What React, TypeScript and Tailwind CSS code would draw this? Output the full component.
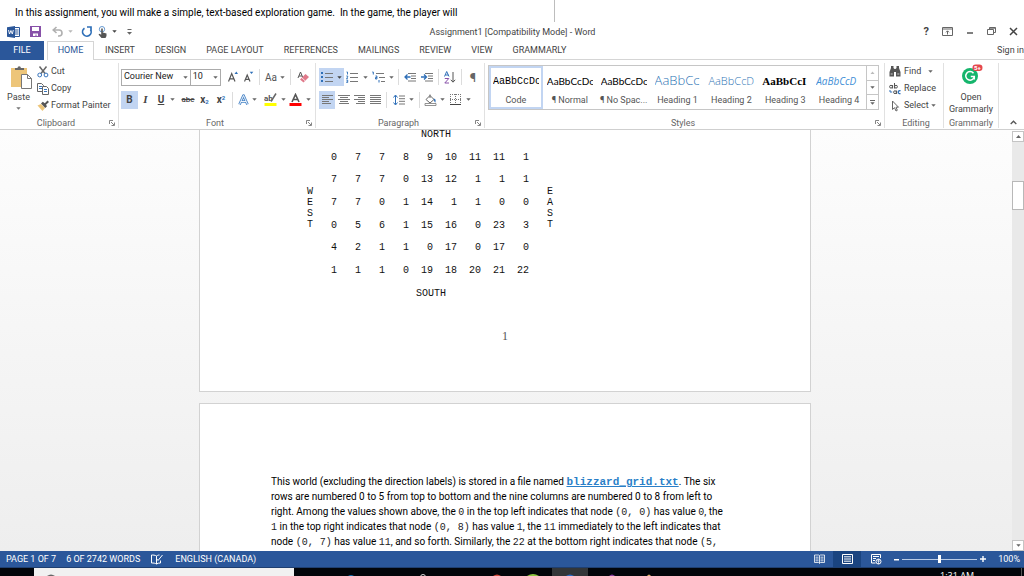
import React, { useState } from 'react';

const ROWS = [
  [0, 7, 7, 8, 9, 10, 11, 11, 1],
  [7, 7, 7, 0, 13, 12, 1, 1, 1],
  [7, 7, 0, 1, 14, 1, 1, 0, 0],
  [0, 5, 6, 1, 15, 16, 0, 23, 3],
  [4, 2, 1, 1, 0, 17, 0, 17, 0],
  [1, 1, 1, 0, 19, 18, 20, 21, 22],
];

const TABS = ['INSERT', 'DESIGN', 'PAGE LAYOUT', 'REFERENCES', 'MAILINGS', 'REVIEW', 'VIEW', 'GRAMMARLY'];

const STYLES = [
  { name: 'Code', sample: 'AaBbCcDc', cls: "font-['Liberation_Mono',monospace] text-[10px] text-black" },
  { name: '¶ Normal', sample: 'AaBbCcDc', cls: "font-['Lato',sans-serif] text-[10px] text-black" },
  { name: '¶ No Spac...', sample: 'AaBbCcDc', cls: "font-['Lato',sans-serif] text-[10px] text-black" },
  { name: 'Heading 1', sample: 'AaBbCc', cls: "font-['Open_Sans',sans-serif] font-light text-[13px] text-[#2e74b5]" },
  { name: 'Heading 2', sample: 'AaBbCcD', cls: "font-['Open_Sans',sans-serif] font-light text-[11px] text-[#2e74b5]" },
  { name: 'Heading 3', sample: 'AaBbCcI', cls: "font-['Liberation_Serif',serif] font-bold text-[11px] text-black" },
  { name: 'Heading 4', sample: 'AaBbCcD', cls: "font-['Open_Sans',sans-serif] italic text-[10px] text-[#3f8fd6]" },
];

function Caret({ className = 'text-[#666]' }: { className?: string }) {
  return (
    <svg width="5" height="3" viewBox="0 0 5 3" className={`shrink-0 ${className}`}>
      <path d="M0.3 0.2h4.4L2.5 2.8z" fill="currentColor" />
    </svg>
  );
}

function Sep() {
  return <span className="w-px h-4 bg-[#dcdcdc] shrink-0" />;
}

function Tool({ label, className = '', children }: { label: string; className?: string; children: React.ReactNode }) {
  return (
    <button aria-label={label} className={`h-[18px] shrink-0 flex items-center justify-center ${className}`}>
      {children}
    </button>
  );
}

// Horizontal rules used by the alignment buttons
function Lines({ rows }: { rows: [number, number][] }) {
  return (
    <svg width="12" height="11" viewBox="0 0 12 11" stroke="#777" shapeRendering="crispEdges">
      {rows.map(([a, b], i) => (
        <path key={i} d={`M${a} ${i * 2 + 1.5}H${b}`} />
      ))}
    </svg>
  );
}

function Launcher() {
  return (
    <svg width="6" height="6" viewBox="0 0 6 6" fill="none" stroke="#777" strokeWidth="0.9">
      <path d="M0.5 4V0.5H4M2 2l3 3M5.5 2.5v3h-3" />
    </svg>
  );
}

function Group({ label, className = '', launcher, children }: { label: string; className?: string; launcher?: boolean; children: React.ReactNode }) {
  return (
    <section className={`flex flex-col border-r border-[#e1e1e1] h-[65px] shrink-0 ${className}`}>
      <div className="flex-1">{children}</div>
      <div className="h-[10px] flex items-center px-[3px] text-[#666]">
        <span className="flex-1 text-center leading-[10px] whitespace-nowrap">{label}</span>
        {launcher && <button aria-label={`${label} settings`}><Launcher /></button>}
      </div>
    </section>
  );
}

function TitleBar() {
  return (
    <header className="h-[19px] flex items-center justify-between text-[#444]">
      <div className="flex-1 flex items-center pl-[7px]">
        <svg width="13" height="12" viewBox="0 0 13 12">
          <path d="M7 1.5h5.5v9H7z" fill="#fff" stroke="#2b579a" />
          <path d="M8 4h3.5M8 6h3.5M8 8h3.5" stroke="#2b579a" />
          <path d="M0 1.2L8 0v12L0 10.800z" fill="#2b579a" />
          <path d="M1.5 4l1 4 1.400-3.500L5.300 8l1-4" stroke="#fff" fill="none" strokeWidth="0.9" />
        </svg>
        <button aria-label="Save" className="ml-[10px]">
          <svg width="11" height="11" viewBox="0 0 11 11">
            <path d="M0 0h11v11H0z" fill="#8750a8" />
            <path d="M2 1h7v4H2zM3 7.500h5V10H6.500V8.500h-1V10H3z" fill="#fff" />
          </svg>
        </button>
        <button aria-label="Undo" className="ml-[11px] flex items-center gap-1">
          <svg width="12" height="11" viewBox="0 0 12 11" fill="none" stroke="#b0b0b0" strokeWidth="1.600">
            <path d="M4.500 1L1.200 4 4.500 7M1.500 4H7a3 3 0 0 1 0 6H6" />
          </svg>
          <Caret className="text-[#b8b8b8]" />
        </button>
        <button aria-label="Redo" className="ml-[8px]">
          <svg width="12" height="12" viewBox="0 0 12 12" fill="none" stroke="#2e6fb8" strokeWidth="1.700">
            <path d="M3.500 2.200A4.300 4.300 0 1 0 9.500 3.500M6 1h4v4" />
          </svg>
        </button>
        <button aria-label="Touch mode" className="ml-[5px] flex items-center gap-1">
          <svg width="10" height="12" viewBox="0 0 10 12">
            <circle cx="4" cy="3.200" r="2.700" fill="none" stroke="#6a9bd1" />
            <path d="M3.200 2.500h1.600v4l3.700 1V10L7.500 12h-4L0.500 8.500l1-0.700 1.700 1z" fill="#555" />
          </svg>
          <Caret className="text-[#444]" />
        </button>
        <button aria-label="Customize toolbar" className="ml-[10px]">
          <svg width="5" height="6" viewBox="0 0 5 6" fill="#666">
            <path d="M0.500 0h4v1h-4zM0 3h5L2.500 5.800z" />
          </svg>
        </button>
      </div>
      <h1 className="text-[9px] pt-[2px] whitespace-nowrap">Assignment1 [Compatibility Mode] - Word</h1>
      <div className="flex-1 flex items-center justify-end gap-[13px] pr-[6px]">
        <button aria-label="Help" className="text-[11px] leading-none font-bold">?</button>
        <button aria-label="Ribbon display options">
          <svg width="11" height="9" viewBox="0 0 11 9" fill="none" stroke="#666">
            <path d="M0.500 0.500h10v8H0.500zM0.500 2h10M5.500 7.500V4M4 5.300L5.500 3.800 7 5.300" />
          </svg>
        </button>
        <button aria-label="Minimize">
          <svg width="8" height="9" viewBox="0 0 8 9" stroke="#555" strokeWidth="1.500"><path d="M1 6h6" /></svg>
        </button>
        <button aria-label="Restore">
          <svg width="9" height="9" viewBox="0 0 9 9" fill="none" stroke="#666">
            <path d="M2.500 2.500v-2h6v5h-2M0.500 2.500h6v5h-6zM2.500 1.200h6" />
          </svg>
        </button>
        <button aria-label="Close">
          <svg width="9" height="9" viewBox="0 0 9 9" stroke="#444" strokeWidth="1.500"><path d="M1 1l7 7M8 1L1 8" /></svg>
        </button>
      </div>
    </header>
  );
}

function TabBar() {
  return (
    <nav className="h-[19px] flex items-stretch text-[#444] whitespace-nowrap">
      <button className="w-11 mr-[3px] bg-[#2b579a] text-white">FILE</button>
      <button className="w-[47px] border border-b-0 border-[#d5d5d5] text-[#2b579a]">HOME</button>
      <div className="flex-1 flex items-center justify-between border-b border-[#d5d5d5] pl-[11px]">
        <div className="flex gap-5 pt-[2px]">
          {TABS.map(t => <button key={t}>{t}</button>)}
        </div>
        <a href="#signin" className="leading-none">Sign in</a>
      </div>
    </nav>
  );
}

function Clipboard() {
  return (
    <Group label="Clipboard" launcher className="w-[119px]">
      <div className="flex">
        <button className="w-[37px] flex flex-col items-center pt-[2px]">
          <svg width="22" height="24" viewBox="0 0 22 24" className="ml-1">
            <path d="M1 3h16v19H1z" fill="#edc579" />
            <path d="M5 5V3h2.500a1.700 1.700 0 0 1 3.400 0H14v2z" fill="#666" />
            <path d="M11.500 9.500h6l4 4v10h-10z" fill="#fff" stroke="#777" />
            <path d="M17.500 9.500v4h4" fill="none" stroke="#777" />
          </svg>
          <span className="leading-3 mt-[2px]">Paste</span>
          <Caret className="text-[#777] mt-1" />
        </button>
        <div className="flex flex-col items-start text-[#444]">
          <button className="h-[17px] flex items-center gap-[2px]">
            <svg width="12" height="12" viewBox="0 0 12 12" fill="none">
              <path d="M2.500 0.500l5.500 7M9.500 0.500L4 7.500" stroke="#666" strokeWidth="1.500" />
              <circle cx="2.700" cy="9" r="1.900" stroke="#3a76bd" />
              <circle cx="9" cy="9" r="1.900" stroke="#3a76bd" />
            </svg>
            Cut
          </button>
          <button className="h-[17px] flex items-center gap-[2px]">
            <svg width="12" height="12" viewBox="0 0 12 12" fill="#fff" stroke="#666">
              <path d="M0.500 0.500h4l2 2v6h-6z" />
              <path d="M2 3.500h3M2 5.500h3" stroke="#3a76bd" />
              <path d="M5.500 3.500h4l2 2v6h-6z" />
              <path d="M7 6.500h3M7 8.500h3" stroke="#3a76bd" />
            </svg>
            Copy
          </button>
          <button className="h-[17px] flex items-center gap-[2px] whitespace-nowrap">
            <svg width="12" height="12" viewBox="0 0 12 12">
              <path d="M0.500 5.500l3.500-1.500 4 4L5.500 11z" fill="#edc579" />
              <path d="M4 3.500l1.800-1.700 2 1.500L10.500 0.500 12 2 9 4.700l1 1.600L8.300 8z" fill="#555" />
            </svg>
            Format Painter
          </button>
        </div>
      </div>
    </Group>
  );
}

function FontGroup() {
  return (
    <Group label="Font" launcher className="w-[197px] pl-[2px]">
      <div className="h-[23px] pt-[5px] flex items-center">
        <div className="relative w-[71px]">
          <select aria-label="Font" className="appearance-none w-full h-[17px] border border-[#ababab] bg-white text-[#222] pl-[2px] block">
            <option>Courier New</option>
            <option>Calibri</option>
          </select>
          <Caret className="absolute right-[3px] top-[7px] text-[#666] pointer-events-none" />
        </div>
        <div className="relative w-8 -ml-px">
          <select aria-label="Font size" className="appearance-none w-full h-[17px] border border-[#ababab] bg-white text-[#222] pl-[2px] block">
            <option>10</option>
            <option>12</option>
          </select>
          <Caret className="absolute right-[3px] top-[7px] text-[#666] pointer-events-none" />
        </div>
        <Tool label="Grow font" className="w-[21px] pl-1">
          <svg width="11" height="12" viewBox="0 0 11 12" fill="none">
            <path d="M0.500 10.500L3.700 2.500 7 10.500M1.700 7.800h4" stroke="#555" strokeWidth="1.200" />
            <path d="M6.500 3L8.300 0.500 10 3z" fill="#2e6fb8" />
          </svg>
        </Tool>
        <Tool label="Shrink font" className="w-[14px]">
          <svg width="10" height="12" viewBox="0 0 10 12" fill="none">
            <path d="M0.500 10.500L3.200 4 6 10.500M1.500 8.300h3.400" stroke="#555" strokeWidth="1.200" />
            <path d="M5.700 0.700L7.500 3 9.300 0.700z" fill="#2e6fb8" />
          </svg>
        </Tool>
        <span className="w-[3px]" />
        <Sep />
        <Tool label="Change case" className="w-[30px] gap-[3px] text-[10px] text-[#555]">Aa<Caret /></Tool>
        <Sep />
        <Tool label="Clear formatting" className="w-6">
          <svg width="12" height="12" viewBox="0 0 12 12">
            <path d="M1 7L3.500 1 6 7M2 5h3" fill="none" stroke="#555" />
            <path d="M3 8.500L8.500 3 12 6 6.500 11.500z" fill="#e0798a" />
            <path d="M4.800 6.700l3.400 3.200" stroke="#fff" strokeWidth="0.800" />
          </svg>
        </Tool>
      </div>
      <div className="h-[27px] flex items-center text-[#444] text-[10px]">
        <Tool label="Bold" className="w-[17px] bg-[#c2d5f2] font-bold">B</Tool>
        <Tool label="Italic" className="w-[15px] italic font-['Liberation_Serif',serif] text-[11px] font-bold">I</Tool>
        <Tool label="Underline" className="w-[27px] gap-[6px] font-bold"><span className="underline">U</span><Caret /></Tool>
        <Tool label="Strikethrough" className="w-4 text-[8px] font-medium"><s>abc</s></Tool>
        <Tool label="Subscript" className="w-[17px] font-bold">
          x<span className="text-[6px] text-[#2e6fb8] mt-1">2</span>
        </Tool>
        <Tool label="Superscript" className="w-4 font-bold">
          x<span className="text-[6px] text-[#2e6fb8] mb-1">2</span>
        </Tool>
        <span className="w-[3px]" />
        <Sep />
        <Tool label="Text effects" className="w-[29px] gap-[3px]">
          <svg width="11" height="12" viewBox="0 0 11 12" fill="none">
            <path d="M1.500 10.500L5.500 1.500 9.500 10.500M3 7.500h5" stroke="#4a86c8" strokeWidth="2.600" strokeLinejoin="round" />
            <path d="M1.500 10.500L5.500 1.500 9.500 10.500M3 7.500h5" stroke="#fff" strokeWidth="0.900" />
          </svg>
          <Caret />
        </Tool>
        <Tool label="Highlight color" className="w-[25px] gap-1">
          <svg width="13" height="13" viewBox="0 0 13 13">
            <text x="0" y="8" fontSize="8" fontWeight="bold" fill="#555">ab</text>
            <path d="M12 0.500L7 8.500" stroke="#666" strokeWidth="1.500" />
            <path d="M0.500 10h12v3h-12z" fill="#ff0" />
          </svg>
          <Caret />
        </Tool>
        <Tool label="Font color" className="w-[26px] gap-1">
          <svg width="13" height="13" viewBox="0 0 13 13">
            <path d="M3 9L6.500 1.500 10 9M4.500 6.500h4" fill="none" stroke="#555" strokeWidth="1.600" />
            <path d="M0.500 10h12v3h-12z" fill="#f00" />
          </svg>
          <Caret />
        </Tool>
      </div>
    </Group>
  );
}

function ParagraphGroup() {
  return (
    <Group label="Paragraph" launcher className="w-[169px] pl-[3px]">
      <div className="h-[23px] pt-[5px] flex items-center">
        <Tool label="Bullets" className="w-[25px] gap-1 bg-[#c2d5f2]">
          <svg width="12" height="12" viewBox="0 0 12 12" shapeRendering="crispEdges">
            <path d="M0 1h2v2H0zM0 5h2v2H0zM0 9h2v2H0z" fill="#2e6fb8" />
            <path d="M4 2.500h8M4 6.500h8M4 10.500h8" stroke="#777" />
          </svg>
          <Caret className="text-[#444]" />
        </Tool>
        <Tool label="Numbering" className="w-[26px] gap-[5px]">
          <svg width="12" height="12" viewBox="0 0 12 12" fill="none">
            <path d="M0.500 1h1v2.500M0.300 5h1.400v1L0.500 7.500h1.300M0.300 9h1.400v2.500H0.300M0.500 10.200h1" stroke="#2e6fb8" strokeWidth="0.900" />
            <path d="M4 2.500h8M4 6.500h8M4 10.500h8" stroke="#777" />
          </svg>
          <Caret />
        </Tool>
        <Tool label="Multilevel list" className="w-[25px] gap-[3px]">
          <svg width="14" height="12" viewBox="0 0 14 12" fill="none">
            <path d="M0.300 1h1v2.500M3.500 5h1.400v3H3.500V6.500h1.400M7 9v2.500" stroke="#2e6fb8" />
            <path d="M4 2.500h8M7 6.500h6M9 10.500h4" stroke="#777" />
          </svg>
          <Caret />
        </Tool>
        <span className="w-[3px]" />
        <Sep />
        <Tool label="Decrease indent" className="w-[22px]">
          <svg width="12" height="10" viewBox="0 0 12 10" fill="none">
            <path d="M4 1.500h8M7 4h5M7 6.500h5M4 9h8" stroke="#777" />
            <path d="M6.500 5H1M3.500 2.500L1 5l2.500 2.500" stroke="#2e6fb8" strokeWidth="1.300" />
          </svg>
        </Tool>
        <Tool label="Increase indent" className="w-3">
          <svg width="12" height="10" viewBox="0 0 12 10" fill="none">
            <path d="M4 1.500h8M7 4h5M7 6.500h5M4 9h8" stroke="#777" />
            <path d="M0 5h5.500M3 2.500L5.500 5 3 7.500" stroke="#2e6fb8" strokeWidth="1.300" />
          </svg>
        </Tool>
        <span className="w-[5px]" />
        <Sep />
        <Tool label="Sort" className="w-[22px]">
          <svg width="12" height="13" viewBox="0 0 12 13" fill="none">
            <path d="M0.500 5.500L2.700 0.500 5 5.500M1.300 4h3" stroke="#2e6fb8" />
            <path d="M0.800 7.500h4l-4 4.500h4.200" stroke="#8750a8" />
            <path d="M9 1v10M6.800 8.800L9 11.200l2.200-2.400" stroke="#555" />
          </svg>
        </Tool>
        <Sep />
        <Tool label="Show marks" className="w-[22px] text-[13px] leading-none text-[#666]">¶</Tool>
      </div>
      <div className="h-[27px] flex items-center">
        <Tool label="Align left" className="w-4 bg-[#c2d5f2]"><Lines rows={[[1, 12], [1, 8], [1, 12], [1, 8], [1, 10]]} /></Tool>
        <Tool label="Center" className="w-[17px]"><Lines rows={[[0, 12], [2, 10], [0, 12], [2, 10], [1, 11]]} /></Tool>
        <Tool label="Align right" className="w-4"><Lines rows={[[0, 11], [4, 11], [0, 11], [4, 11], [2, 11]]} /></Tool>
        <Tool label="Justify" className="w-4"><Lines rows={[[0, 11], [0, 11], [0, 11], [0, 11], [0, 11]]} /></Tool>
        <span className="w-[2px]" />
        <Sep />
        <Tool label="Line spacing" className="w-8 gap-1">
          <svg width="12" height="12" viewBox="0 0 12 12" fill="none">
            <path d="M2.500 1.500v9M0.500 3.500l2-2.500 2 2.500M0.500 8.500l2 2.500 2-2.500" stroke="#2e6fb8" />
            <path d="M6 2h6M6 4.700h6M6 7.300h6M6 10h6" stroke="#777" />
          </svg>
          <Caret />
        </Tool>
        <Sep />
        <Tool label="Shading" className="w-[29px] gap-[3px]">
          <svg width="13" height="12" viewBox="0 0 13 12">
            <path d="M2 5.500L6 1.500l4 4-4 3.500z" fill="#fff" stroke="#666" />
            <path d="M6 4V0.500" stroke="#666" />
            <path d="M9.500 4.500c3 0.500 2 2.500 2 4-1 0-1.500-2-2-4z" fill="#2e6fb8" />
            <path d="M1 9.500h11v2H1z" fill="#fff" stroke="#777" strokeWidth="0.800" />
          </svg>
          <Caret />
        </Tool>
        <Tool label="Borders" className="w-[22px] gap-[5px]">
          <svg width="11" height="11" viewBox="0 0 11 11" stroke="#777" fill="none">
            <path d="M0 0.500h11M0 5.500h11M0.500 0v10M5.500 0v10M10.500 0v10" strokeDasharray="1 1" />
            <path d="M0 10.500h11" stroke="#444" />
          </svg>
          <Caret />
        </Tool>
      </div>
    </Group>
  );
}

function StylesGroup() {
  const [active, setActive] = useState('Code');
  return (
    <Group label="Styles" launcher className="flex-1 min-w-0 pl-[3px]">
      <div className="mt-[2px] mr-[5px] h-[45px] flex border border-[#c6c6c6]">
        <div className="flex-1 flex min-w-0 overflow-hidden">
          {STYLES.map(s => (
            <button
              key={s.name}
              onClick={() => setActive(s.name)}
              className={`flex-1 min-w-0 border-2 px-[2px] flex flex-col items-center ${active === s.name ? 'border-[#c2d5f2]' : 'border-transparent'}`}
            >
              <span className={`h-[26px] w-full flex items-center justify-start overflow-hidden whitespace-nowrap ${s.cls}`}>{s.sample}</span>
              <span className="leading-3 text-[#555] whitespace-nowrap">{s.name}</span>
            </button>
          ))}
        </div>
        <div className="w-3 flex flex-col border-l border-[#c6c6c6] divide-y divide-[#c6c6c6]">
          <button aria-label="Previous styles" className="flex-1 flex items-center justify-center">
            <svg width="5" height="3" viewBox="0 0 5 3"><path d="M0.500 3h4L2.500 0.500z" fill="#bbb" /></svg>
          </button>
          <button aria-label="Next styles" className="flex-1 flex items-center justify-center"><Caret /></button>
          <button aria-label="More styles" className="flex-1 flex flex-col gap-px items-center justify-center">
            <span className="w-[5px] h-px bg-[#666]" />
            <Caret />
          </button>
        </div>
      </div>
    </Group>
  );
}

function EditingGroup() {
  return (
    <Group label="Editing" className="w-[59px] pl-1">
      <div className="flex flex-col items-start text-[#444]">
        <button className="h-[17px] flex items-center gap-[3px]">
          <svg width="12" height="11" viewBox="0 0 12 11" fill="#555">
            <path d="M2 0h2.500v2L5.500 3h1l1-1V0H10v2l1.500 4v4.500H7V6H5v4.500H0.500V6L2 2z" />
            <path d="M1.700 8h2M8.300 8h2" stroke="#fff" strokeWidth="0.700" />
          </svg>
          Find
          <Caret className="ml-1 text-[#666]" />
        </button>
        <button className="h-[17px] flex items-center gap-[3px]">
          {/* two small letter pairs joined by an arrow */}
          <svg width="12" height="12" viewBox="0 0 12 12" fill="none">
            <circle cx="2" cy="3.700" r="1.400" stroke="#555" />
            <path d="M3.600 2v3.500M5.500 0v5.500" stroke="#555" />
            <circle cx="7" cy="3.700" r="1.400" stroke="#555" />
            <circle cx="6" cy="9.200" r="1.400" stroke="#555" />
            <path d="M7.600 7.500V11" stroke="#555" />
            <path d="M11.500 7.900a1.500 1.500 0 1 0 0 2.600" stroke="#2e6fb8" strokeWidth="1.300" />
            <path d="M1 7v2h2.200" stroke="#2e6fb8" />
          </svg>
          Replace
        </button>
        <button className="h-[17px] flex items-center gap-[3px]">
          <svg width="12" height="12" viewBox="0 0 12 12" fill="#fff" stroke="#666">
            <path d="M3.500 1v8.500l2-1.800L7 11l1.300-0.700L7 7.200h2.500z" />
          </svg>
          <span className="flex items-center gap-[2px]">Select<Caret /></span>
        </button>
      </div>
    </Group>
  );
}

function Ribbon() {
  return (
    <div className="h-[70px] pt-[3px] flex border-b border-[#cfcfcf] text-[#444]">
      <Clipboard />
      <FontGroup />
      <ParagraphGroup />
      <StylesGroup />
      <EditingGroup />
      <Group label="Grammarly" className="w-[55px]">
        <button className="w-full flex flex-col items-center">
          <svg width="24" height="22" viewBox="0 0 24 22">
            <circle cx="11" cy="13" r="8" fill="#15b56c" />
            <path d="M14.500 10.300A4.300 4.300 0 1 0 15.300 13.500H11.800M15.300 13.500v3" fill="none" stroke="#fff" strokeWidth="1.500" />
            <rect x="13.500" y="1.500" width="10" height="6.500" rx="3.200" fill="#e5484d" />
            <text x="15" y="7" fontSize="6" fontWeight="bold" fill="#fff">5+</text>
          </svg>
          <span className="leading-3 mt-[6px]">Open<br />Grammarly</span>
        </button>
      </Group>
      <button aria-label="Collapse ribbon" className="flex-none w-[25px] flex items-end justify-center pb-1 pl-1">
        <svg width="7" height="5" viewBox="0 0 7 5" fill="none" stroke="#555" strokeWidth="1.300"><path d="M0.700 4L3.500 1.200 6.300 4" /></svg>
      </button>
    </div>
  );
}

function Side({ word }: { word: string }) {
  return (
    <div className="w-[6px] pt-10 flex flex-col leading-[11px]">
      {word.split('').map((c, i) => <span key={i}>{c}</span>)}
    </div>
  );
}

function Code({ children }: { children: React.ReactNode }) {
  return <code className="font-['Liberation_Mono',monospace] text-[10px] leading-none text-[#222]">{children}</code>;
}

function Document() {
  return (
    <main className="flex-1 min-w-0 overflow-hidden flex flex-col items-center gap-[11px]">
      <article className="w-[612px] h-[262px] shrink-0 bg-white border border-t-0 border-[#d2d2d2] text-[#111] font-['Liberation_Mono',monospace] text-[10px]">
        <p className="leading-[11px] -mt-px pl-[221px]">NORTH</p>
        <div className="flex pl-[107px] pt-[6px]">
          <Side word="WEST" />
          <table className="h-[136px]">
            <tbody>
              {ROWS.map((row, i) => (
                <tr key={i}>
                  {row.map((n, j) => <td key={j} className="w-6 p-0 text-right leading-[11px] align-middle">{n}</td>)}
                </tr>
              ))}
            </tbody>
          </table>
          <span className="w-[18px]" />
          <Side word="EAST" />
        </div>
        <p className="pt-[6px] leading-[11px] pl-[216px]">SOUTH</p>
        <p className="pt-[30px] leading-[14px] text-center font-['Liberation_Serif',serif] text-[12px] text-[#555]">1</p>
      </article>
      <article className="w-[612px] h-[792px] shrink-0 bg-white border border-[#d2d2d2] px-[71px] pt-[70px] text-black font-['Roboto',sans-serif] text-[10px] leading-[15px] whitespace-nowrap">
        <p>
          This world (excluding the direction labels) is stored in a file named{' '}
          <a href="#grid" className="font-['Liberation_Mono',monospace] text-[11px] leading-none font-bold text-[#2a7fc8] underline">blizzard_grid.txt</a>. The six<br />
          rows are numbered 0 to 5 from top to bottom and the nine columns are numbered 0 to 8 from left to<br />
          right. Among the values shown above, the <Code>0</Code> in the top left indicates that node <Code>(0, 0)</Code> has value <Code>0</Code>, the<br />
          <Code>1</Code> in the top right indicates that node <Code>(0, 8)</Code> has value <Code>1</Code>, the <Code>11</Code> immediately to the left indicates that<br />
          node <Code>(0, 7)</Code> has value <Code>11</Code>, and so forth. Similarly, the <Code>22</Code> at the bottom right indicates that node <Code>(5,</Code><br />
          <Code>8)</Code> has value <Code>22</Code>.
        </p>
      </article>
    </main>
  );
}

function ScrollBar() {
  return (
    <div className="w-[14px] pl-[2px] shrink-0 flex flex-col">
      <button aria-label="Scroll up" className="h-[11px] mt-px border border-[#c4c4c4] bg-white flex items-center justify-center">
        <svg width="5" height="3" viewBox="0 0 5 3"><path d="M0 3h5L2.500 0z" fill="#666" /></svg>
      </button>
      <div className="flex-1 bg-[#e9e9e9] pt-[39px]">
        <div className="h-[29px] bg-white border border-[#b8b8b8]" />
      </div>
      <button aria-label="Scroll down" className="h-[11px] border border-[#c4c4c4] bg-white flex items-center justify-center">
        <Caret />
      </button>
    </div>
  );
}

function StatusBar() {
  const [zoom, setZoom] = useState(50);
  return (
    <footer className="h-[17px] shrink-0 bg-[#2b579a] border-b border-[#1f3f70] text-white flex items-center whitespace-nowrap">
      <span className="pl-[6px] pt-px">PAGE 1 OF 7</span>
      <span className="pl-[10px] pt-px">6 OF 2742 WORDS</span>
      <button aria-label="Proofing" className="ml-[11px]">
        <svg width="12" height="11" viewBox="0 0 12 11" fill="none" stroke="#fff">
          <path d="M5.500 2v8M5.500 2C4 1 2 1 0.500 1v8c2 0 3.500 0 5 1 1-0.800 2.500-1 4-1V6.500M5.500 2C7 1 8 1 8.500 1M11.500 1L7 6.500 5.800 5" />
        </svg>
      </button>
      <span className="pl-3 pt-px flex-1">ENGLISH (CANADA)</span>
      <button aria-label="Read mode" className="mr-2">
        <svg width="11" height="10" viewBox="0 0 11 10" fill="none" stroke="#fff">
          <path d="M0.500 1h4l1 0.700 1-0.700h4v7.500h-4l-1 0.700-1-0.700h-4zM5.500 1.500v8M1.500 3.200h3M1.500 5h3M1.500 6.800h3M6.500 3.200h3M6.500 5h3M6.500 6.800h3" strokeWidth="0.800" />
        </svg>
      </button>
      <button aria-label="Print layout" className="w-7 h-4 bg-[#1a4480] flex items-center justify-center">
        <svg width="11" height="10" viewBox="0 0 11 10" fill="none" stroke="#fff">
          <path d="M0.500 0.500h10v9H0.500zM2 2.800h7M2 5h7M2 7.200h7" />
        </svg>
      </button>
      <button aria-label="Web layout" className="ml-[10px]">
        <svg width="11" height="11" viewBox="0 0 11 11" fill="none" stroke="#fff">
          <path d="M4.500 9H0.500V0.500h9V4M2 2.500h6M2 4.500h3M2 6.500h2" />
          <circle cx="7.500" cy="7.500" r="2.500" />
          <path d="M6 7h3M7.500 5v5" strokeWidth="0.700" />
        </svg>
      </button>
      <button aria-label="Zoom out" className="ml-3">
        <svg width="5" height="5" viewBox="0 0 5 5"><path d="M0 2h5v1.500H0z" fill="#fff" /></svg>
      </button>
      <input
        type="range"
        aria-label="Zoom"
        value={zoom}
        onChange={e => setZoom(Number(e.target.value))}
        className="mx-[3px] w-[75px] h-3 appearance-none bg-transparent [&::-webkit-slider-runnable-track]:h-px [&::-webkit-slider-runnable-track]:bg-[#b9cbe6] [&::-webkit-slider-thumb]:appearance-none [&::-webkit-slider-thumb]:w-[3px] [&::-webkit-slider-thumb]:h-2 [&::-webkit-slider-thumb]:-mt-1 [&::-webkit-slider-thumb]:bg-white"
      />
      <button aria-label="Zoom in">
        <svg width="6" height="6" viewBox="0 0 6 6"><path d="M0 2.300h6v1.400H0zM2.300 0h1.400v6H2.300z" fill="#fff" /></svg>
      </button>
      <span className="ml-3 mr-1 pt-px">100%</span>
    </footer>
  );
}

function TaskBar() {
  return (
    <div className="h-2 shrink-0 bg-[#02050a] flex overflow-hidden text-white">
      <div className="ml-[34px] w-[260px] flex justify-start bg-[#f1f1f1]">
        <svg width="40" height="8" viewBox="0 0 40 8">
          <path d="M13 8q4-3 8 0z" fill="#666" />
        </svg>
      </div>
      <svg width="360" height="8" viewBox="0 0 360 8">
        <path d="M258 0h36v8h-36z" fill="#333638" />
        <path d="M54 8q3-2 6 0z" fill="#1273b5" />
        <circle cx="129" cy="9" r="2.500" fill="none" stroke="#ddd" />
        <path d="M199 8q4-3 8 0z" fill="#d04a3c" />
        <path d="M233 8q6-4 12 0z" fill="#8bc540" />
        <path d="M272 8q4-3 8 0z" fill="#2b6cc4" />
        <path d="M315 8q3-3 6 0z" fill="#8a3fa0" />
        <path d="M353 8q2-3 4 0z" fill="#e0b070" />
      </svg>
      <span className="ml-auto mr-[47px] pt-[3px] leading-[10px] font-['Open_Sans',sans-serif]">1:31 AM</span>
      <span className="w-px bg-[#555] mr-[2px]" />
    </div>
  );
}

export default function App() {
  return (
    <div className="h-screen flex flex-col overflow-hidden bg-white font-['Roboto',sans-serif] text-[9px]">
      <div className="h-[22px] shrink-0 flex text-black">
        <p className="w-[555px] border-r border-[#bdbdbd] pl-[15px] pt-[5px] leading-4 text-[10px] whitespace-pre">
          In this assignment, you will make a simple, text-based exploration game.  In the game, the player will
        </p>
      </div>
      <TitleBar />
      <TabBar />
      <Ribbon />
      <div className="flex-1 min-h-0 flex bg-linear-to-b from-[#fdfdfd] to-[#eeeeee]">
        <Document />
        <ScrollBar />
      </div>
      <StatusBar />
      <TaskBar />
    </div>
  );
}
